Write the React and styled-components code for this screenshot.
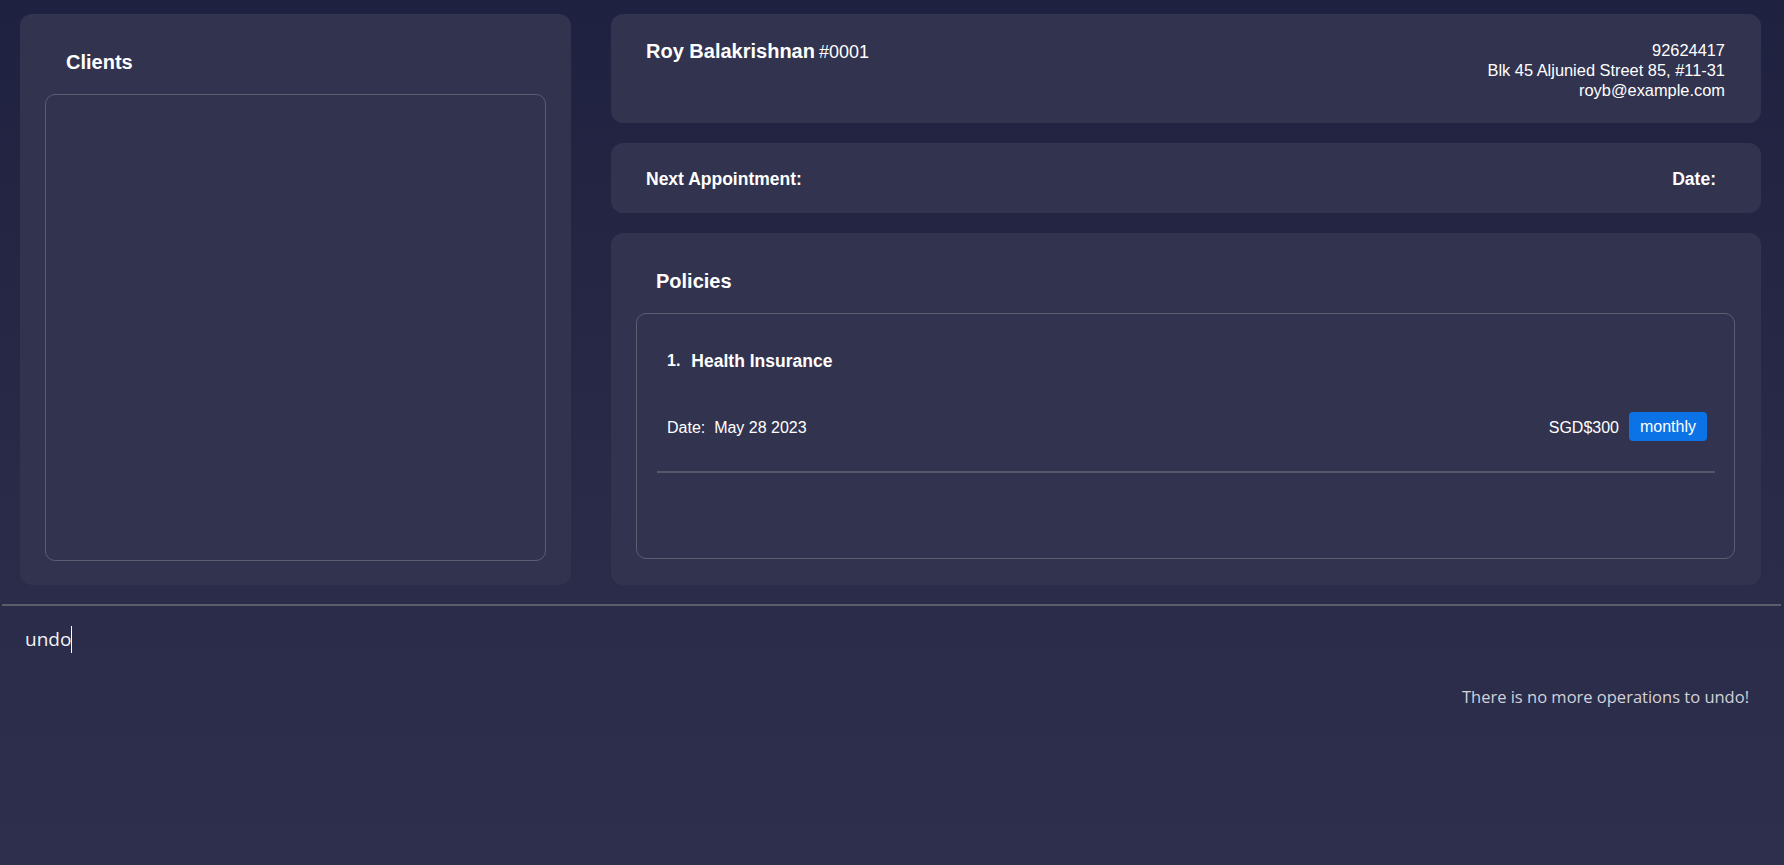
import React from 'react';
import styled, { createGlobalStyle } from 'styled-components';

const GlobalStyle = createGlobalStyle`
  html, body {
    margin: 0;
    padding: 0;
  }
  body {
    font-family: "Liberation Sans", Arial, sans-serif;
    color: #fff;
    background: #2d2e4b;
  }
`

const Page = styled.div`
  min-height: 100vh;
  display: flex;
  flex-direction: column;
  background: linear-gradient(180deg, #1f2140 0%, #2a2b48 60%, #2e2f4c 100%);
`

const Main = styled.div`
  display: flex;
  gap: 40px;
  height: 571px;
  padding: 14px 23px 19px 20px;
`

const Panel = styled.div`
  background: #32334f;
  border-radius: 12px;
`

const ClientsPanel = styled(Panel)`
  width: 551px;
  display: flex;
  flex-direction: column;
  padding: 0 25px 24px;
  box-sizing: border-box;
`

const PanelTitle = styled.div`
  font-size: 20px;
  font-weight: bold;
  line-height: 22px;
  padding: 37px 0 0 21px;
  margin-bottom: 21px;
`

const ListBox = styled.div`
  flex: 1;
  border: 1px solid #5c5d70;
  border-radius: 10px;
  display: flex;
  flex-direction: column;
`

const RightColumn = styled.div`
  flex: 1;
  display: flex;
  flex-direction: column;
  gap: 20px;
`

const ProfileCard = styled(Panel)`
  height: 109px;
  box-sizing: border-box;
  padding: 25px 36px 0 35px;
  display: flex;
  justify-content: space-between;
  align-items: flex-start;
`

const Name = styled.div`
  font-size: 20px;
  font-weight: bold;
  line-height: 24px;
`

const ClientId = styled.span`
  font-size: 18px;
  font-weight: normal;
  margin-left: 4px;
`

const Contact = styled.div`
  text-align: right;
  font-size: 16.4px;
  line-height: 20px;
  padding-top: 1px;
`

const AppointmentCard = styled(Panel)`
  height: 70px;
  box-sizing: border-box;
  padding: 3px 45px 0 35px;
  display: flex;
  justify-content: space-between;
  align-items: center;
  font-size: 17.5px;
  font-weight: bold;
`

const PoliciesPanel = styled(Panel)`
  flex: 1;
  display: flex;
  flex-direction: column;
  padding: 0 26px 26px 25px;
`

const PolicyTitle = styled(PanelTitle)`
  padding-top: 37px;
  padding-left: 20px;
`

const PolicyItem = styled.div`
  padding: 0 19px 0 20px;
`

const PolicyHeader = styled.div`
  padding: 36px 0 0 10px;
  line-height: 22px;
  font-size: 17.5px;
  font-weight: bold;
  display: flex;
  gap: 11px;
`

const Index = styled.span`
  font-size: 16px;
`

const PolicyRow = styled.div`
  margin-top: 41px;
  height: 30px;
  padding: 0 8px 0 10px;
  display: flex;
  align-items: center;
  justify-content: space-between;
  font-size: 16px;
`

const Premium = styled.div`
  display: flex;
  align-items: center;
  gap: 10px;
`

const Badge = styled.span`
  background: #0b73e6;
  color: #fff;
  border-radius: 4px;
  padding: 0 11px;
  height: 29px;
  line-height: 29px;
  margin-top: -4px;
`

const Separator = styled.div`
  height: 2px;
  background: #56576b;
  margin-top: 28px;
`

const Divider = styled.div`
  height: 2px;
  background: #5b5c6c;
  margin: 0 3px 0 2px;
`

const CommandBox = styled.div`
  padding: 19px 25px 0;
  height: 28px;
  display: flex;
  align-items: center;
  font-family: "Open Sans", "Noto Sans", sans-serif;
  font-size: 19px;
  color: #f2f2f6;
`

const Caret = styled.span`
  width: 1px;
  height: 27px;
  background: #fff;
`

const ResultText = styled.div`
  text-align: right;
  padding: 33px 35px 0 0;
  font-family: "Open Sans", "Noto Sans", sans-serif;
  font-size: 16.5px;
  line-height: 22px;
  color: #d2d2da;
`

const App = () => {
  return (
    <Page>
      <GlobalStyle />
      <Main>
        <ClientsPanel>
          <PanelTitle>Clients</PanelTitle>
          <ListBox />
        </ClientsPanel>
        <RightColumn>
          <ProfileCard>
            <Name>
              Roy Balakrishnan<ClientId>#0001</ClientId>
            </Name>
            <Contact>
              <div>92624417</div>
              <div>Blk 45 Aljunied Street 85, #11-31</div>
              <div>royb@example.com</div>
            </Contact>
          </ProfileCard>
          <AppointmentCard>
            <span>Next Appointment:</span>
            <span>Date:</span>
          </AppointmentCard>
          <PoliciesPanel>
            <PolicyTitle>Policies</PolicyTitle>
            <ListBox>
              <PolicyItem>
                <PolicyHeader>
                  <Index>1.</Index>
                  <span>Health Insurance</span>
                </PolicyHeader>
                <PolicyRow>
                  <span>Date:&nbsp; May 28 2023</span>
                  <Premium>
                    <span>SGD$300</span>
                    <Badge>monthly</Badge>
                  </Premium>
                </PolicyRow>
                <Separator />
              </PolicyItem>
            </ListBox>
          </PoliciesPanel>
        </RightColumn>
      </Main>
      <Divider />
      <CommandBox>
        undo<Caret />
      </CommandBox>
      <ResultText>There is no more operations to undo!</ResultText>
    </Page>
  )
}

export default App;
